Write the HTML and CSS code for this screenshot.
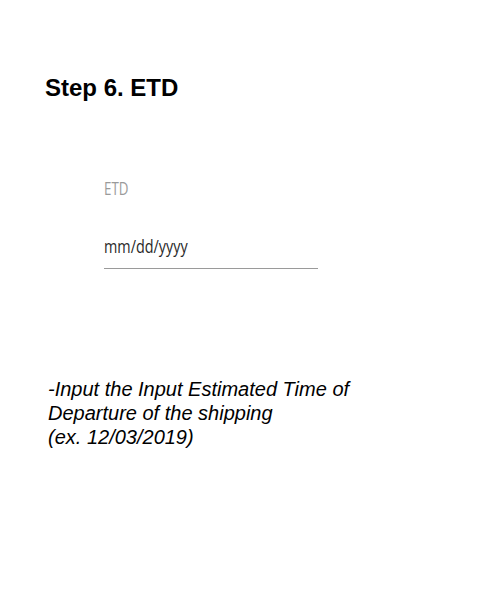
FILE: index.html
```html
<!DOCTYPE html>
<html>
<head>
<meta charset="utf-8">
<link rel="stylesheet" href="styles.css">
</head>
<body>
<div class="page">
  <h1 class="title">Step 6. ETD</h1>
  <div class="field">
    <div class="label"><span class="squeeze label-text">ETD</span></div>
    <div class="input"><span class="squeeze">mm/dd/yyyy</span></div>
  </div>
  <p class="note">-Input the Input Estimated Time of<br>Departure of the shipping<br>(ex. 12/03/2019)</p>
</div>
</body>
</html>
```
FILE: styles.css
```css
html, body {
  margin: 0;
  padding: 0;
  background: #fff;
}
.page {
  width: 500px;
  height: 600px;
  display: flex;
  flex-direction: column;
}
.title {
  margin: 74px 0 0 45px;
  font-family: "Liberation Sans", Arial, sans-serif;
  font-weight: bold;
  font-size: 24px;
  line-height: 28px;
  color: #000;
}
.field {
  margin: 76px 0 0 104px;
  width: 214px;
  font-family: "Open Sans", sans-serif;
  font-size: 18px;
  line-height: 20px;
}
.squeeze {
  display: inline-block;
  transform: scaleX(0.8);
  transform-origin: left center;
  white-space: nowrap;
}
.label {
  color: #9a9a9a;
}
.label-text {
  transform: scaleX(0.74);
}
.input {
  margin-top: 38px;
  color: #2a2a2a;
  padding-bottom: 12px;
  border-bottom: 1px solid #9a9a9a;
}
.note {
  margin: 108px 0 0 48px;
  font-family: "Liberation Sans", Arial, sans-serif;
  font-style: italic;
  font-size: 20px;
  line-height: 24px;
  color: #000;
}
```
